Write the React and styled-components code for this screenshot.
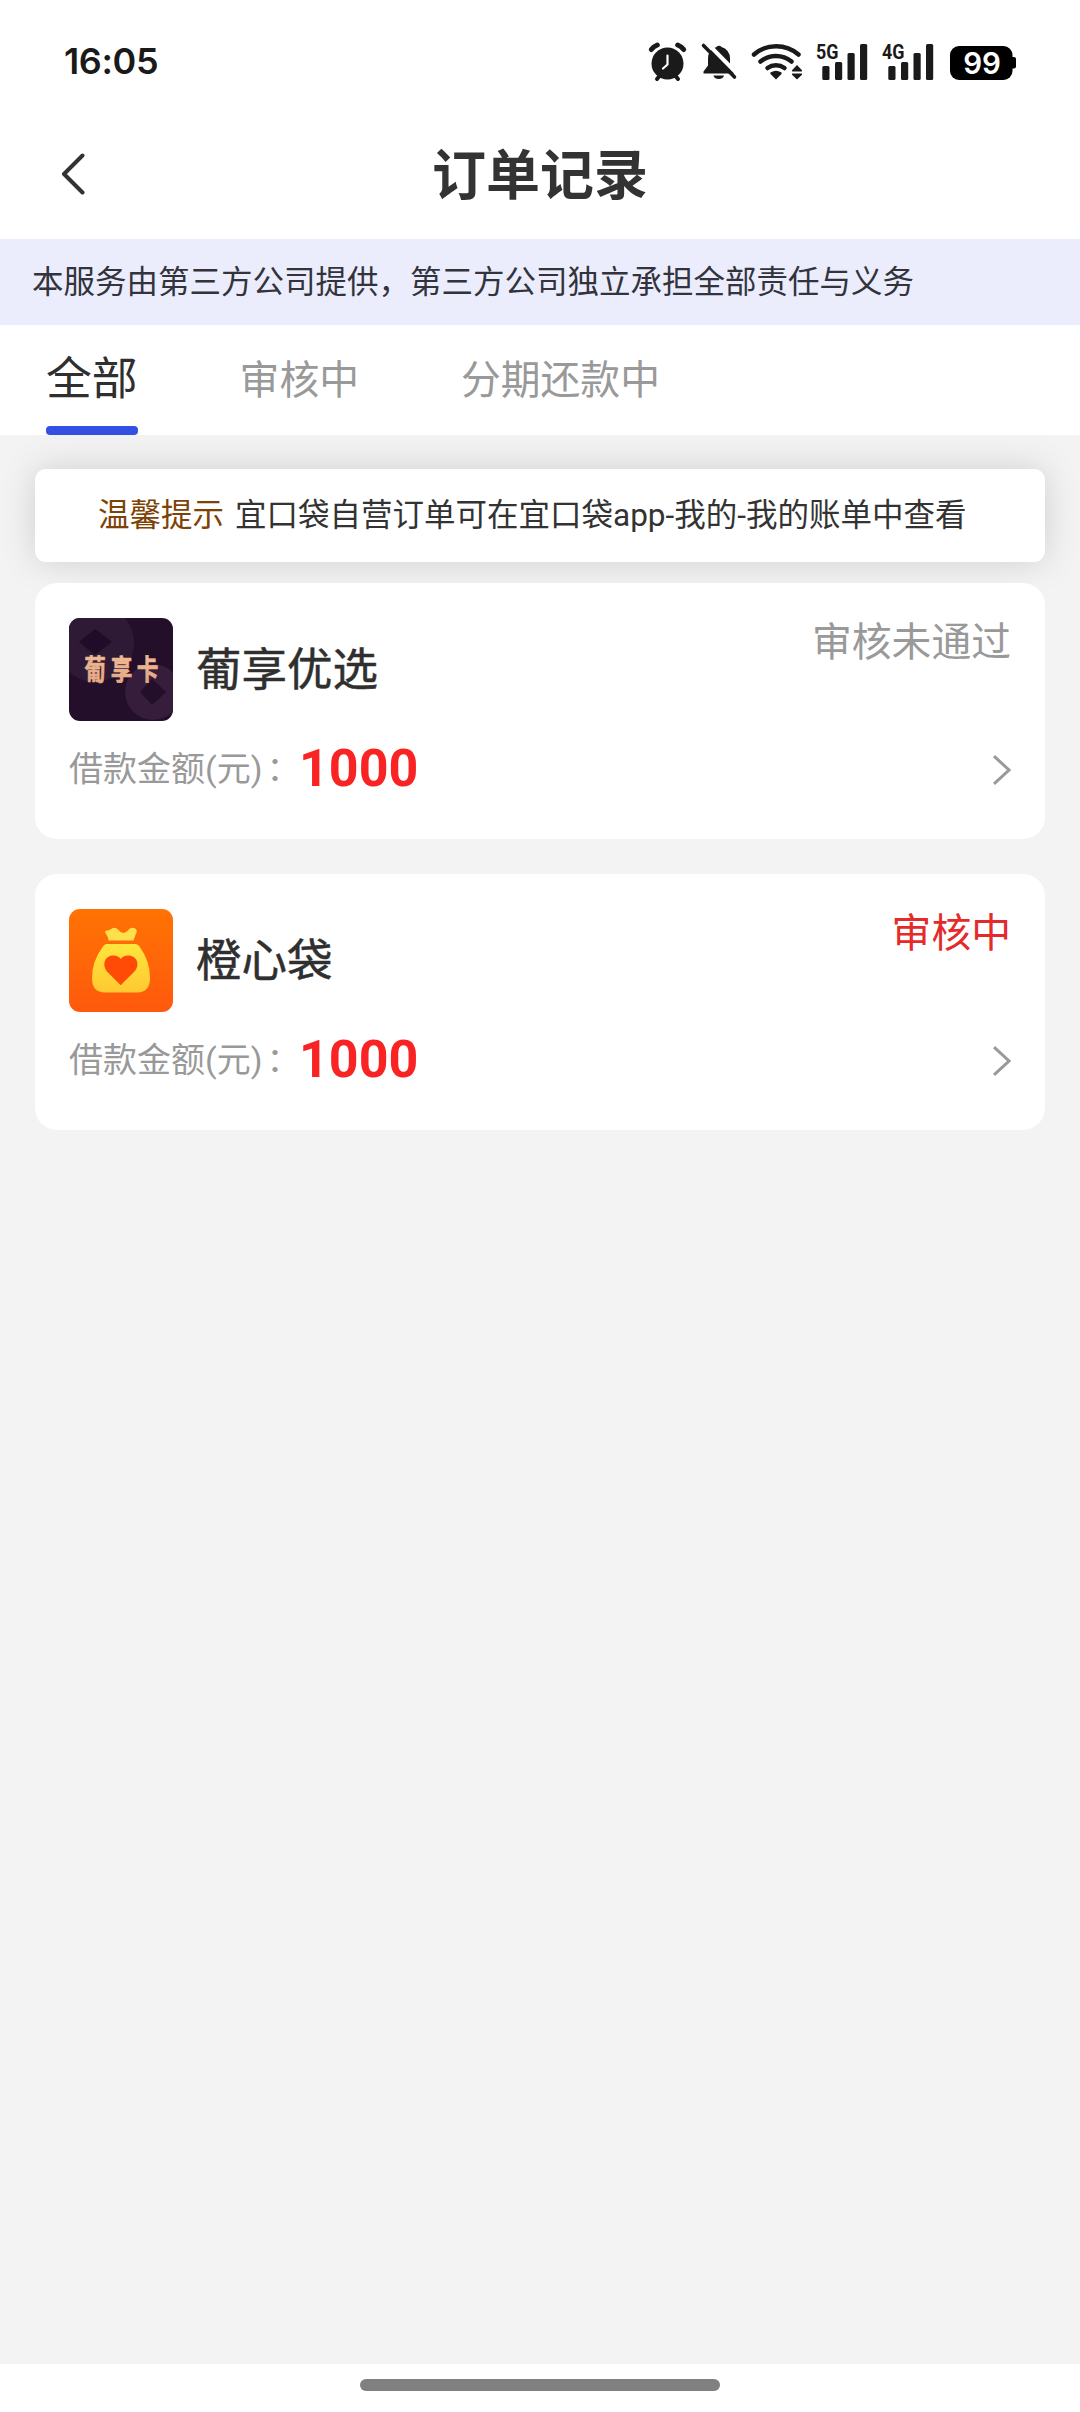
import React from "react";
import styled, { createGlobalStyle } from "styled-components";

const GlobalStyle = createGlobalStyle`
  *, *::before, *::after { box-sizing: border-box; }
  html, body { margin: 0; padding: 0; }
  body {
    background: #f3f3f3;
    font-family: Roboto, "Noto Sans CJK SC", sans-serif;
    color: #333;
  }
  svg { display: block; flex: none; }
`;

const Screen = styled.div`
  width: 1080px;
  height: 2412px;
  display: flex;
  flex-direction: column;
  background: #f3f3f3;
  overflow: hidden;
`;

const StatusBar = styled.header`
  height: 109px;
  padding: 15px 64px 0 64px;
  display: flex;
  align-items: center;
  justify-content: space-between;
  background: #fff;
`;

const Clock = styled.time`
  margin-bottom: 2px;
  font-family: Inter, sans-serif;
  font-size: 36px;
  font-weight: 600;
  line-height: 44px;
  letter-spacing: -0.4px;
  color: #1a1a1a;
`;

const StatusIcons = styled.div`
  display: flex;
  align-items: center;
`;

const NavBar = styled.nav`
  height: 130px;
  padding: 0 61px;
  display: grid;
  grid-template-columns: 60px 1fr 60px;
  align-items: center;
  background: #fff;
`;

const Title = styled.h1`
  margin: 0;
  padding-top: 6px;
  text-align: center;
  font-size: 54px;
  line-height: 70px;
  font-weight: 700;
  color: #333;
`;

const Banner = styled.p`
  margin: 0;
  height: 86px;
  padding-left: 32px;
  background: #ebedfd;
  color: #33333b;
  font-size: 31.5px;
  line-height: 88px;
  white-space: nowrap;
`;

const Tabs = styled.div`
  height: 110px;
  padding-left: 46px;
  display: flex;
  gap: 102px;
  background: #fff;
`;

const Tab = styled.div`
  padding-top: 9px;
  display: flex;
  flex-direction: column;
  justify-content: space-between;
  font-size: ${(p) => (p.$active ? 45.8 : 39.8)}px;
  line-height: ${(p) => (p.$active ? 92 : 94)}px;
  white-space: nowrap;
  color: ${(p) => (p.$active ? "#2f2f2f" : "#999")};
`;

const Underline = styled.span`
  height: 9px;
  border-radius: 4px;
  background: #3350e2;
`;

const Content = styled.main`
  flex: 1;
  padding: 34px 35px 0;
  display: flex;
  flex-direction: column;
  overflow: hidden;
`;

const Notice = styled.div`
  height: 93px;
  padding-left: 63px;
  display: flex;
  gap: 11px;
  border-radius: 11px;
  background: #fff;
  box-shadow: 0 0 36px rgba(0, 0, 0, 0.15);
  font-size: 31.5px;
  line-height: 94px;
  white-space: nowrap;
`;

const NoticeTag = styled.span`
  color: #7d4206;
`;

const OrderList = styled.div`
  margin-top: 21px;
  display: flex;
  flex-direction: column;
  gap: 35px;
  position: relative;
`;

const Card = styled.article`
  height: 256px;
  padding: 35px 34px 0;
  border-radius: 22px;
  background: #fff;
`;

const CardHead = styled.div`
  display: flex;
  height: 103px;
`;

const ProductName = styled.h2`
  margin: 0 auto 0 23px;
  font-size: 45.5px;
  line-height: 106px;
  font-weight: 400;
  color: #2f2f2f;
  -webkit-text-stroke: 0.5px #2f2f2f;
`;

const State = styled.span`
  font-size: 39.8px;
  line-height: 50px;
  color: ${(p) => (p.$pending ? "#e42a2a" : "#999")};
`;

const CardFoot = styled.div`
  height: 98px;
  display: flex;
  align-items: center;
`;

const AmountLabel = styled.span`
  width: 230px;
  font-size: 34px;
  line-height: 90px;
  margin-bottom: 2px;
  color: #999;
  white-space: nowrap;
`;

const Colon = styled.span`
  margin-left: 4px;
`;

const Amount = styled.strong`
  margin: 0 auto 2px 0;
  font-size: 52px;
  line-height: 90px;
  font-weight: 700;
  color: #fa2323;
`;

const HomeBar = styled.footer`
  height: 48px;
  padding-top: 15px;
  display: flex;
  justify-content: center;
  background: #fff;
`;

const HomePill = styled.span`
  width: 360px;
  height: 12px;
  border-radius: 6px;
  background: #808080;
`;

const INK = "#1a1a1a";

/* Drawn in one strip whose origin sits at (640, 36) of the screen. */
const SystemIcons = () => (
  <svg width="376" height="52" viewBox="640 36 376 52">
    <g fill="none" stroke={INK} strokeLinecap="round">
      <path d="M651.300 49.500a14 14 0 0 1 6-4.500" strokeWidth="5" />
      <path d="M683.700 49.500a14 14 0 0 0-6-4.500" strokeWidth="5" />
      <path d="M657 79l2.500-3M678 79l-2.500-3" strokeWidth="4" />
    </g>
    <circle cx="667.500" cy="63.500" r="16" fill={INK} />
    <path d="M667.500 55.500v9l-4.500 4" fill="none" stroke="#fff" strokeWidth="2.200" strokeLinecap="round" strokeLinejoin="round" />

    <path d="M703.500 73.500v-2l4.500-6v-7a11.500 11.500 0 0 1 8.500-11.500a3 3 0 0 1 5 0a11.500 11.500 0 0 1 8.500 11.500v7l4.500 6v2z" fill={INK} />
    <path d="M713.500 75.500h10.500a5.300 4 0 0 1-10.500 0z" fill={INK} />
    <path d="M706 42l32 32.500" stroke="#fff" strokeWidth="4" />
    <path d="M703.500 45.500l31 31.500" stroke={INK} strokeWidth="3.600" strokeLinecap="round" />

    <g fill="none" stroke={INK} strokeWidth="4.500" strokeLinecap="round">
      <path d="M754 54.500a34 34 0 0 1 44.500 0" />
      <path d="M760.500 61.500a24.500 24.500 0 0 1 31 0" />
      <path d="M767.500 68a14.500 14.500 0 0 1 17 0" />
    </g>
    <path d="M776 79.500l-5.500-5.500q-.8-1 .4-1.700a10 10 0 0 1 10.200 0q1.200.7.400 1.700z" fill={INK} />
    <path d="M797 65l5 5.300q.6 1.200-.8 1.200h-8.400q-1.400 0-.8-1.200zM797 79.500l5-4.800q.6-1.200-.8-1.200h-8.400q-1.400 0-.8 1.200z" fill={INK} />

    {[["5G", 0], ["4G", 66]].map(([label, dx]) => (
      <g key={label} transform={`translate(${dx} 0)`} fill={INK}>
        <text x="816" y="58.500" fontFamily="Roboto, sans-serif" fontSize="21" fontWeight="700" textLength="22.500" lengthAdjust="spacingAndGlyphs">{label}</text>
        <rect x="822.300" y="66" width="7.200" height="14" rx="1.500" />
        <rect x="835" y="62" width="7.200" height="18" rx="1.500" />
        <rect x="847.500" y="53" width="7.200" height="27" rx="1.500" />
        <rect x="860" y="44" width="7.200" height="36" rx="1.500" />
      </g>
    ))}

    <rect x="950" y="46" width="62.500" height="34" rx="9" fill="#000" />
    <path d="M1012 57h2q2 0 2 2v7.500q0 2-2 2h-2z" fill="#000" />
    <text x="982" y="74" textAnchor="middle" fontFamily="Inter, sans-serif" fontSize="29.500" fontWeight="600" fill="#fff">99</text>
  </svg>
);

const BackIcon = () => (
  <svg width="26" height="42" viewBox="0 0 26 42">
    <path d="M21.500 2.500L3 21L21.500 39.500" fill="none" stroke="#333" strokeWidth="4" strokeLinecap="round" strokeLinejoin="round" />
  </svg>
);

const ArrowIcon = () => (
  <svg width="18" height="30" viewBox="0 0 18 30">
    <path d="M1 1.200L16 15L1 28.800" fill="none" stroke="#999" strokeWidth="3" />
  </svg>
);

const GrapeLogo = () => (
  <svg width="104" height="103" viewBox="0 0 104 103">
    <defs>
      <clipPath id="tile"><rect width="104" height="103" rx="11" /></clipPath>
      <linearGradient id="gold" x1="0" y1="0" x2="0" y2="1">
        <stop offset="0" stopColor="#f3c19c" />
        <stop offset="1" stopColor="#e2a27c" />
      </linearGradient>
    </defs>
    <g clipPath="url(#tile)">
      <rect width="104" height="103" fill="#230f29" />
      <circle cx="26" cy="25" r="39" fill="#2e1a35" />
      <path d="M26 11L43 24L26 37L10 24Z" fill="#200c26" />
      <circle cx="84" cy="74" r="28" fill="#351d3b" />
      <path d="M83 61L97 74L83 87L71 74Z" fill="#240f2a" />
      <g fill="url(#gold)" stroke="#eab38d" strokeWidth=".6" fontFamily="Noto Sans CJK SC, sans-serif" fontSize="28.500" fontWeight="700" textAnchor="middle">
        <text transform="translate(26 62) scale(.76 1)">葡</text>
        <text transform="translate(52.700 62) scale(.76 1)">享</text>
        <text transform="translate(78.500 62) scale(.76 1)">卡</text>
      </g>
    </g>
  </svg>
);

const BagLogo = () => (
  <svg width="104" height="103" viewBox="0 0 104 103">
    <defs>
      <linearGradient id="orange" x1="0" y1="0" x2="0" y2="1">
        <stop offset="0" stopColor="#ff7303" />
        <stop offset="1" stopColor="#ff590d" />
      </linearGradient>
      <linearGradient id="bag" x1="0" y1="0" x2="0" y2="1">
        <stop offset="0" stopColor="#ffe63c" />
        <stop offset="1" stopColor="#ffc832" />
      </linearGradient>
    </defs>
    <rect width="104" height="103" rx="11" fill="url(#orange)" />
    <path d="M39.500 31.500L39 28.500L36.200 23.500Q35.800 21.500 38 21.500Q40.500 21.500 42.500 19.700Q46 17.500 49 20.500Q52.500 25 56 23.500Q58.500 22.500 60.500 19.800Q63 17.800 66.300 19.400Q69 21.500 66.800 25L64.500 31.500Z" fill="#ffe04a" />
    <path d="M37.500 35H66.500Q69 35 70.500 37.500Q81 52 81 69Q81 83.500 68 83.500H36Q23 83.500 23 69Q23 52 34 37.500Q35.500 35 37.500 35Z" fill="url(#bag)" />
    <path d="M51.700 76.300L37.500 62Q33.500 56 36.500 50.500Q39.500 46.300 44.500 46.500Q49.500 46.700 51.700 50Q54 46.700 59 46.500Q64 46.300 67.200 50.500Q70.300 56 66 62Z" fill="#ff4b06" />
  </svg>
);

const tabs = ["全部", "审核中", "分期还款中"];

const orders = [
  { name: "葡享优选", state: "审核未通过", amount: 1000, Logo: GrapeLogo },
  { name: "橙心袋", state: "审核中", pending: true, amount: 1000, Logo: BagLogo },
];

const Order = ({ name, state, pending, amount, Logo }) => (
  <Card>
    <CardHead>
      <Logo />
      <ProductName>{name}</ProductName>
      <State $pending={pending}>{state}</State>
    </CardHead>
    <CardFoot>
      <AmountLabel>借款金额(元)<Colon>：</Colon></AmountLabel>
      <Amount>{amount}</Amount>
      <ArrowIcon />
    </CardFoot>
  </Card>
);

export default function App() {
  return (
    <Screen>
      <GlobalStyle />
      <StatusBar>
        <Clock>16:05</Clock>
        <StatusIcons><SystemIcons /></StatusIcons>
      </StatusBar>
      <NavBar>
        <BackIcon />
        <Title>订单记录</Title>
      </NavBar>
      <Banner>本服务由第三方公司提供，第三方公司独立承担全部责任与义务</Banner>
      <Tabs>
        {tabs.map((label, i) => (
          <Tab key={label} $active={i === 0}>
            {label}
            {i === 0 && <Underline />}
          </Tab>
        ))}
      </Tabs>
      <Content>
        <Notice>
          <NoticeTag>温馨提示</NoticeTag>
          <span>宜口袋自营订单可在宜口袋app-我的-我的账单中查看</span>
        </Notice>
        <OrderList>
          {orders.map((order) => <Order key={order.name} {...order} />)}
        </OrderList>
      </Content>
      <HomeBar><HomePill /></HomeBar>
    </Screen>
  );
}
